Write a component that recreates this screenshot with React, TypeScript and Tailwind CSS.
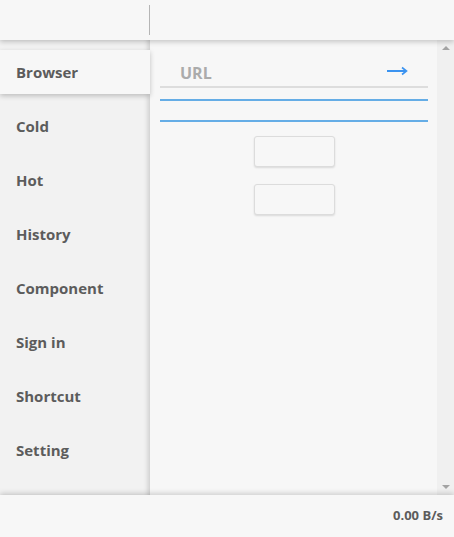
const navItems = ['Browser', 'Cold', 'Hot', 'History', 'Component', 'Sign in', 'Shortcut', 'Setting']

function ArrowRight() {
  return (
    <svg width="21" height="10" viewBox="0 0 21 10" fill="none">
      <path d="M0 5H19" stroke="#3b93f0" strokeWidth="2" />
      <path d="M15 1.5L19.5 5L15 8.5" stroke="#3b93f0" strokeWidth="1.6" />
    </svg>
  )
}

function Scrollbar() {
  return (
    <div className="flex w-[17px] shrink-0 flex-col items-center justify-between bg-[#f0f0f0] py-[6px]">
      <div className="h-0 w-0 border-x-[4px] border-b-[4px] border-x-transparent border-b-[#a3a3a3]" />
      <div className="h-0 w-0 border-x-[4px] border-t-[4px] border-x-transparent border-t-[#a3a3a3]" />
    </div>
  )
}

export default function App() {
  const active = 'Browser'

  return (
    <div
      className="flex h-[537px] w-[454px] flex-col overflow-hidden bg-[#f7f7f7] text-[#5c5c5c]"
      style={{ fontFamily: '"Open Sans", "Noto Sans", sans-serif' }}
    >
      {/* Top bar */}
      <header className="relative z-20 flex h-10 shrink-0 items-center bg-[#f7f7f7] shadow-[0_2px_5px_rgba(0,0,0,0.2)]">
        <div className="ml-[149px] h-[30px] w-px bg-[#b5b5b5]" />
      </header>

      <div className="flex min-h-0 flex-1">
        {/* Sidebar */}
        <aside className="w-[150px] shrink-0 bg-[#f2f2f2] pt-[5px] shadow-[inset_-5px_0_5px_-3px_rgba(0,0,0,0.16)]">
          {navItems.map((item) => (
            <div key={item} className="h-[54px] py-[5px]">
              <div
                className={
                  item === active
                    ? 'relative z-10 flex h-[44px] items-center bg-[#f7f7f7] pl-4 shadow-[0_2px_5px_rgba(0,0,0,0.22)]'
                    : 'flex h-[44px] items-center pl-4'
                }
              >
                <span className="text-[15px] font-bold">{item}</span>
              </div>
            </div>
          ))}
        </aside>

        {/* Main */}
        <main className="flex min-w-0 flex-1">
          <div className="flex-1 pl-[10px] pr-[9px] pt-[16px]">
            <div className="flex h-[32px] items-center justify-between border-b-2 border-[#dddddd] pl-5 pr-5">
              <span className="mt-[3px] text-[16px] font-bold text-[#ababab]">URL</span>
              <ArrowRight />
            </div>
            <div className="mt-[11px] h-[2px] bg-[#65ade6]" />
            <div className="mt-[19px] h-[2px] bg-[#65ade6]" />
            <div className="mt-[14px] flex flex-col items-center gap-[17px]">
              <button className="h-[31px] w-[81px] rounded-[3px] border border-[#dcdcdc] bg-[#f7f7f7] shadow-[0_1px_2px_rgba(0,0,0,0.12)]" />
              <button className="h-[31px] w-[81px] rounded-[3px] border border-[#dcdcdc] bg-[#f7f7f7] shadow-[0_1px_2px_rgba(0,0,0,0.12)]" />
            </div>
          </div>
          <Scrollbar />
        </main>
      </div>

      {/* Status bar */}
      <footer className="relative z-20 flex h-[42px] shrink-0 items-center justify-end bg-[#f7f7f7] pr-[11px] shadow-[0_-2px_5px_rgba(0,0,0,0.16)]">
        <span className="text-[13px] font-bold">0.00 B/s</span>
      </footer>
    </div>
  )
}
